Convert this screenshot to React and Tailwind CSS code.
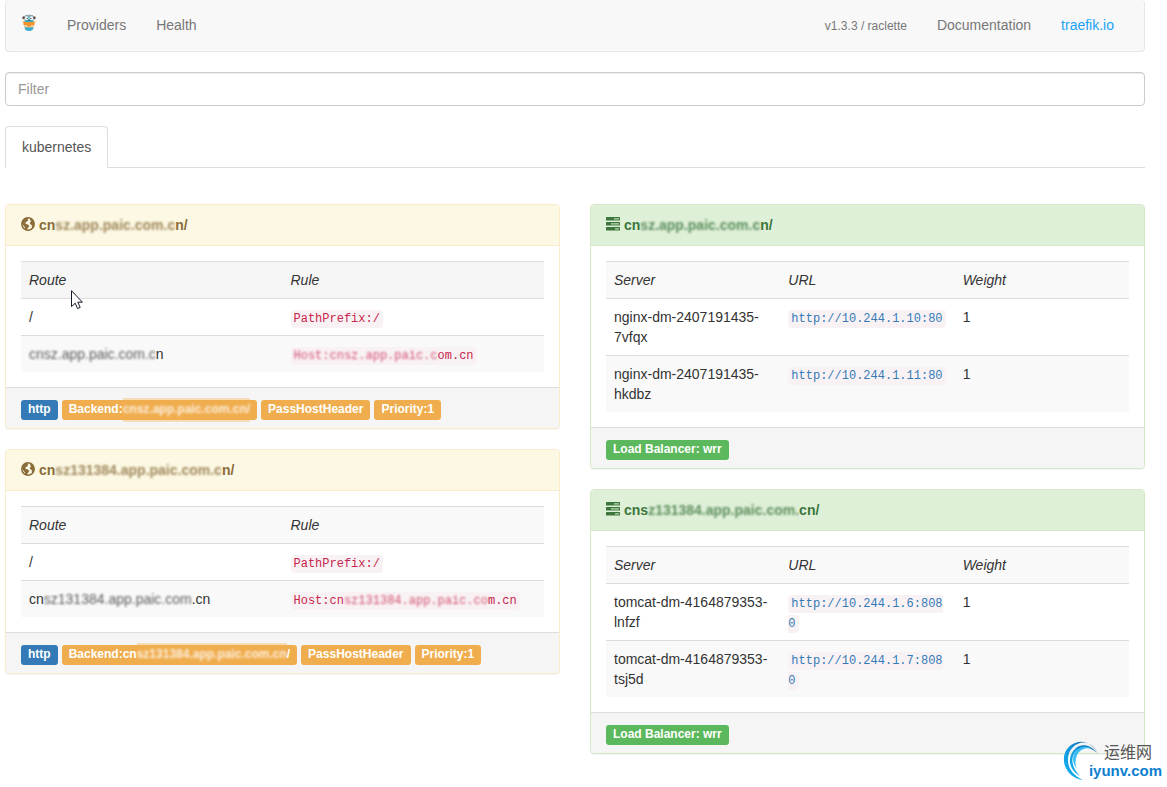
import { useState } from "react";

const frontends = [
  {
    title: ["cn", "sz.app.paic.com.c", "n/"],
    route: ["", "cnsz.app.paic.com.c", "n"],
    rule: ["", "Host:cnsz.app.paic.c", "om.cn"],
    backend: ["Backend:", "cnsz.app.paic.com.cn/", ""],
    strips: "before:absolute before:inset-x-0 before:-top-1 before:h-0.5 before:bg-[#f6dcb8] after:absolute after:inset-x-0 after:-bottom-1.5 after:h-0.5 after:bg-[#f6dcb8]",
    hovered: true,
  },
  {
    title: ["cn", "sz131384.app.paic.com.c", "n/"],
    route: ["cn", "sz131384.app.paic.com", ".cn"],
    rule: ["Host:cn", "sz131384.app.paic.co", "m.cn"],
    backend: ["Backend:cn", "sz131384.app.paic.com.cn", "/"],
    strips: "before:absolute before:inset-x-0 before:-top-1 before:h-0.5 before:bg-[#f6dcb8]",
    hovered: false,
  },
];

const backends = [
  {
    title: ["cn", "sz.app.paic.com.c", "n/"],
    servers: [
      { name: "nginx-dm-2407191435-7vfqx", url: "http://10.244.1.10:80", weight: 1 },
      { name: "nginx-dm-2407191435-hkdbz", url: "http://10.244.1.11:80", weight: 1 },
    ],
  },
  {
    title: ["cns", "z131384.app.paic.com.", "cn/"],
    servers: [
      { name: "tomcat-dm-4164879353-lnfzf", url: "http://10.244.1.6:8080", weight: 1 },
      { name: "tomcat-dm-4164879353-tsj5d", url: "http://10.244.1.7:8080", weight: 1 },
    ],
  },
];

// host names are partly hidden: [clear, masked, clear]
function Masked({ parts, strips = "" }) {
  return (
    <>
      {parts[0]}
      <span className={strips ? `relative inline-block ${strips}` : ""}>
        <span className="opacity-80 blur-[1px]">{parts[1]}</span>
      </span>
      {parts[2]}
    </>
  );
}

function GlobeIcon() {
  return (
    <svg className="mt-0.5 h-3.5 w-3.5 shrink-0" viewBox="0 0 14 14" aria-hidden="true">
      <circle cx="7" cy="7" r="6.2" fill="none" stroke="currentColor" strokeWidth="1.5" />
      <path
        fill="currentColor"
        d="M1.4 3.4 4.2 1 7.2 .8 6.6 2.2 7.4 3 6 4.4 4.4 5.6 4.6 6.8 6.8 7.6 8.4 8.8 7.4 10.4 6.4 11.4 6.2 13.2 3.8 12.6 4 10.4 2.4 8.4 .8 6.8ZM9 1 12 2.6 13.2 5.6 13.2 8.4 12 11 10.8 10 10.8 8 9.2 7.2 8.8 5.6 10.2 4.4 9.2 3.2Z"
      />
    </svg>
  );
}

function ServersIcon() {
  return (
    <svg className="mt-0.5 h-3.5 w-3.5 shrink-0" viewBox="0 0 14 14" aria-hidden="true">
      {[0, 5, 10].map((y) => (
        <rect key={y} x="0" y={y} width="14" height="3.6" rx=".6" fill="currentColor" />
      ))}
      <path d="M8 1.2H13V2.4H8ZM5 6.2H13V7.4H5ZM9 11.2H13V12.4H9Z" fill="#b9d6b3" />
    </svg>
  );
}

function GopherLogo() {
  return (
    <svg className="h-[18px] w-[14px]" viewBox="0 0 14 18" role="img" aria-label="Traefik">
      <path d="M2.6 4Q2.6.8 7 .8T11.4 4V13.6Q11.4 17 7 17T2.6 13.6Z" fill="#37abc8" />
      <path d="M3 1H11V2.6H3Z" fill="#98a2a8" />
      <circle cx="1.8" cy="3.8" r="1.5" fill="#5c4a48" />
      <circle cx="12.2" cy="3.8" r="1.5" fill="#5c4a48" />
      <circle cx="4.6" cy="4.2" r="1.9" fill="#fff" />
      <circle cx="9.4" cy="4.2" r="1.9" fill="#fff" />
      <circle cx="5.2" cy="4.4" r=".7" fill="#444" />
      <circle cx="8.8" cy="4.4" r=".7" fill="#444" />
      <path d="M6.2 5.4H7.8V6.8H6.2Z" fill="#6b5350" />
      <path d="M0 6.2 1.8 7.2V9.2L.2 8.2ZM14 6.2 12.2 7.2V9.2L13.8 8.2Z" fill="#f6dca0" />
      <path d="M1.4 7.4 7 8.2 12.6 7.4V11H1.4Z" fill="#f3932a" />
      <path d="M2.4 11H11.6V13.4H2.4Z" fill="#f3c796" />
      <path d="M5 11H9V12.4H5Z" fill="#f3932a" />
    </svg>
  );
}

function Panel({ tone, icon, title, footer, children }) {
  const warning = tone === "warning";
  return (
    <section
      className={`rounded border bg-white shadow-[0_1px_1px_rgba(0,0,0,0.05)] ${
        warning ? "border-[#faebcc]" : "border-[#d6e9c6]"
      }`}
    >
      <h2
        className={`flex items-start gap-1 rounded-t-[3px] border-b px-[15px] py-[10px] font-bold ${
          warning
            ? "border-[#faebcc] bg-[#fcf8e3] text-[#8a6d3b]"
            : "border-[#d6e9c6] bg-[#dff0d8] text-[#3c763d]"
        }`}
      >
        {icon}
        <span>
          <Masked parts={title} />
        </span>
      </h2>
      <div className="p-[15px]">{children}</div>
      <div className="flex flex-wrap gap-1 rounded-b-[3px] border-t border-[#ddd] bg-[#f5f5f5] px-[15px] pt-3 pb-2">
        {footer}
      </div>
    </section>
  );
}

function Label({ color, children }) {
  return (
    <span
      className={`rounded-[3px] px-[7px] pt-[2px] pb-1 text-[12px] leading-[14px] font-bold whitespace-nowrap text-white ${color}`}
    >
      {children}
    </span>
  );
}

function Th({ children }) {
  return <th className="border-t border-[#ddd] p-2 text-left font-normal italic">{children}</th>;
}

function Td({ children }) {
  return <td className="border-t border-[#ddd] p-2 align-top">{children}</td>;
}

function Code({ children }) {
  return (
    <code className="rounded bg-[#f9f2f4] px-[3px] py-[2px] font-['Liberation_Mono',monospace] text-[12px] leading-4 break-all text-[#c7254e]">
      {children}
    </code>
  );
}

function Frontend({ item }) {
  return (
    <Panel
      tone="warning"
      icon={<GlobeIcon />}
      title={item.title}
      footer={
        <>
          <Label color="bg-[#337ab7]">http</Label>
          <Label color="bg-[#f0ad4e]">
            <Masked parts={item.backend} strips={item.strips} />
          </Label>
          <Label color="bg-[#f0ad4e]">PassHostHeader</Label>
          <Label color="bg-[#f0ad4e]">Priority:1</Label>
        </>
      }
    >
      <table className="w-full table-fixed">
        <thead>
          <tr className={item.hovered ? "bg-[#f5f5f5]" : "bg-[#f9f9f9]"}>
            <Th>Route</Th>
            <Th>Rule</Th>
          </tr>
        </thead>
        <tbody>
          <tr>
            <Td>/</Td>
            <Td>
              <Code>PathPrefix:/</Code>
            </Td>
          </tr>
          <tr className="bg-[#f9f9f9]">
            <Td>
              <Masked parts={item.route} />
            </Td>
            <Td>
              <Code>
                <Masked parts={item.rule} />
              </Code>
            </Td>
          </tr>
        </tbody>
      </table>
    </Panel>
  );
}

function Backend({ item }) {
  return (
    <Panel
      tone="success"
      icon={<ServersIcon />}
      title={item.title}
      footer={<Label color="bg-[#5cb85c]">Load Balancer: wrr</Label>}
    >
      <table className="w-full table-fixed">
        <thead>
          <tr className="bg-[#f9f9f9]">
            <Th>Server</Th>
            <Th>URL</Th>
            <Th>Weight</Th>
          </tr>
        </thead>
        <tbody>
          {item.servers.map((s) => (
            <tr key={s.name} className="even:bg-[#f9f9f9]">
              <Td>{s.name}</Td>
              <Td>
                <Code>
                  <a href={s.url} className="text-[#337ab7]">
                    {s.url}
                  </a>
                </Code>
              </Td>
              <Td>{s.weight}</Td>
            </tr>
          ))}
        </tbody>
      </table>
    </Panel>
  );
}

function Watermark() {
  return (
    <div className="absolute right-[5px] bottom-1 h-[44px] w-[99px]">
      <svg className="absolute top-0 left-0 h-[42px] w-[40px]" viewBox="0 0 40 42" aria-hidden="true">
        <defs>
          <linearGradient id="swirl" x1="0" y1="1" x2="1" y2="0">
            <stop offset="0" stopColor="#16b6f4" />
            <stop offset=".5" stopColor="#1295dc" />
            <stop offset="1" stopColor="#0b4f96" />
          </linearGradient>
        </defs>
        <path d="M36 17C31 5 21 0 12 4 2 8-1 18 2 27 5 35 12 40 20 41 11 37 5 30 5 21 5 12 10 6 17 4 25 2 32 7 36 17Z" fill="url(#swirl)" />
        <path d="M34 14C28 6 19 4 13 9 6 15 5 24 10 31 12 34 15 36 17 37 11 31 8 24 10 17 13 8 24 4 34 14Z" fill="url(#swirl)" />
        <path d="M29 10C23 8 17 10 14 16 12 21 12 26 14 30 9 24 9 17 13 12 17 7 24 6 29 10Z" fill="#35bdf3" />
      </svg>
      <span className="absolute top-[2px] right-[10px] font-['Noto_Sans_CJK_SC',sans-serif] text-[16px] leading-5 text-[#555]">
        运维网
      </span>
      <span className="absolute right-0 bottom-1 font-['Liberation_Sans',Arial,sans-serif] text-[15px] leading-4 font-bold text-[#0f7fd0]">
        iyunv.com
      </span>
    </div>
  );
}

function Cursor() {
  return (
    <svg className="absolute top-[290px] left-[71px] h-5 w-3" viewBox="0 0 12 20" aria-hidden="true">
      <path d="M.5.7V16.6L4.2 13.2 6.6 18.6 9.2 17.4 6.8 12.2H11.4Z" fill="#fff" stroke="#111827" />
    </svg>
  );
}

export default function App() {
  const [filter, setFilter] = useState("");

  return (
    <div className="relative min-h-screen bg-white pr-[22px] pl-[5px] font-['Liberation_Sans',Arial,sans-serif] text-[14px] leading-5 text-[#333]">
      <nav className="flex h-[52px] items-start justify-between rounded border border-t-0 border-[#e7e7e7] bg-[#f8f8f8] px-[15px] text-[#777]">
        <div className="flex">
          <a href="#/" className="pt-[14px] pr-4 pl-px">
            <GopherLogo />
          </a>
          <a href="#/providers" className="px-[15px] pt-[15px]">
            Providers
          </a>
          <a href="#/health" className="px-[15px] pt-[15px]">
            Health
          </a>
        </div>
        <div className="flex">
          <a href="#/version" className="px-[15px] pt-4 text-[12px]">
            v1.3.3 / raclette
          </a>
          <a href="#/documentation" className="px-[15px] pt-[15px]">
            Documentation
          </a>
          <a href="#/traefik" className="px-[15px] pt-[15px] text-[#1ba2f5]">
            traefik.io
          </a>
        </div>
      </nav>

      <input
        type="text"
        aria-label="Filter"
        placeholder="Filter"
        value={filter}
        onChange={(e) => setFilter(e.target.value)}
        className="mt-5 block h-[34px] w-full rounded border border-[#ccc] bg-white px-3 text-[#555] shadow-[inset_0_1px_1px_rgba(0,0,0,0.075)] outline-none placeholder:text-[#999]"
      />

      <div role="tablist" className="mt-5 flex border-b border-[#ddd]">
        <button
          type="button"
          role="tab"
          aria-selected="true"
          className="-mb-px rounded-t border border-b-0 border-[#ddd] bg-white px-4 pt-[10px] pb-[11px] text-[#555]"
        >
          kubernetes
        </button>
      </div>

      <main className="mt-9 grid grid-cols-2 items-start gap-[30px]">
        <div className="flex flex-col gap-5">
          {frontends.map((item, i) => (
            <Frontend key={i} item={item} />
          ))}
        </div>
        <div className="flex flex-col gap-5">
          {backends.map((item, i) => (
            <Backend key={i} item={item} />
          ))}
        </div>
      </main>

      <Cursor />
      <Watermark />
    </div>
  );
}
